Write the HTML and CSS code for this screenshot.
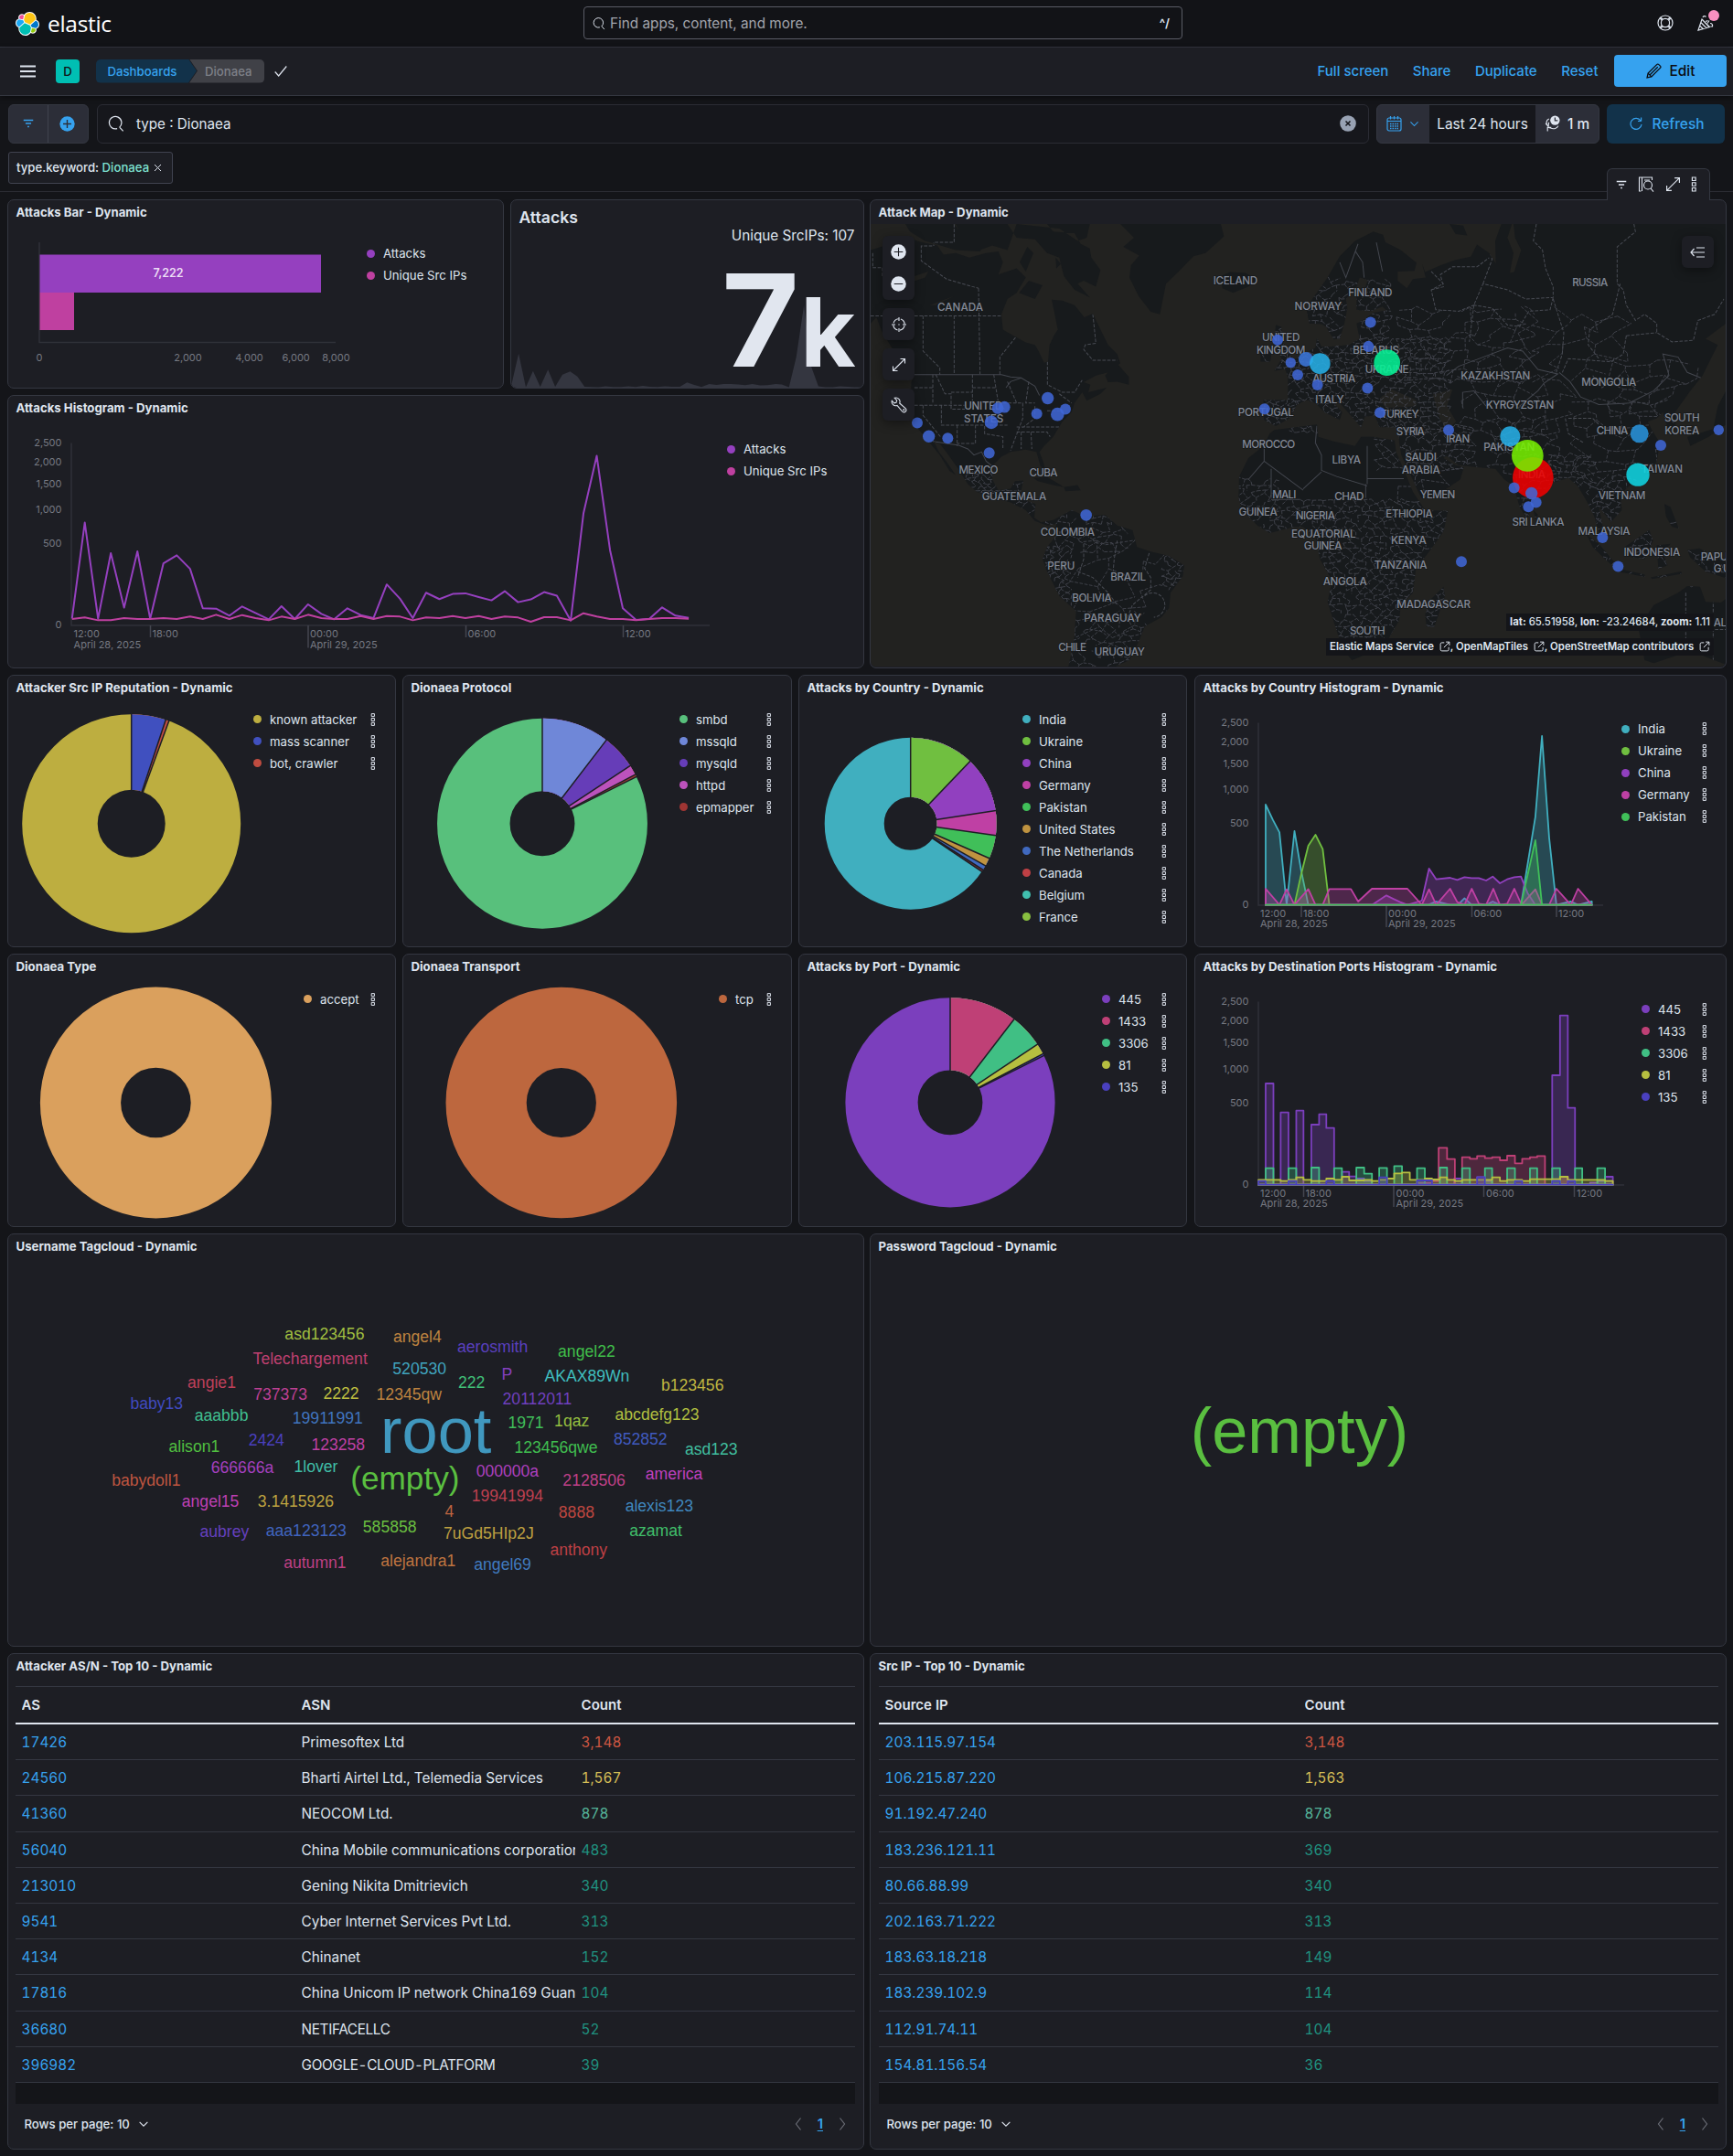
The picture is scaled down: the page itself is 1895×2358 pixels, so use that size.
FILE: index.html
```html
<!DOCTYPE html>
<html lang="en">
<head>
<meta charset="utf-8">
<title>Dionaea - Elastic</title>
<link rel="stylesheet" href="styles.css">
</head>
<body>
<svg class="defs" width="0" height="0">
  <symbol id="more" viewBox="0 0 6 14"><path d="M1.200.6h3.200v3H1.200zM1.200 5.500h3.200v3H1.200zM1.200 10.400h3.200v3H1.200z" fill="none" stroke="currentColor"/></symbol>
  <symbol id="search" viewBox="0 0 16 16"><path d="M11.300 11.700A6 6 0 1 0 9 13m2.300-1.300L14.800 15.500" fill="none" stroke="currentColor" stroke-width="1.100"/></symbol>
  <symbol id="down" viewBox="0 0 16 16"><path d="M3 5.500l5 5 5-5" fill="none" stroke="currentColor" stroke-width="1.300"/></symbol>
  <symbol id="filter" viewBox="0 0 16 16"><path d="M2 4h12M4.500 8h7M7 12h2" fill="none" stroke="currentColor" stroke-width="1.600"/></symbol>
  <symbol id="expand" viewBox="0 0 16 16"><path d="M9.500 1.500h5v5M14.500 1.500l-13 13M1.500 9.500v5h5" fill="none" stroke="currentColor" stroke-width="1.100"/></symbol>
  <symbol id="popout" viewBox="0 0 16 16"><path d="M7 2.500H3.500a2 2 0 0 0-2 2v8a2 2 0 0 0 2 2h8a2 2 0 0 0 2-2V9M9.500 1.500h5v5M14.500 1.500l-8 8" fill="none" stroke="currentColor" stroke-width="1.300"/></symbol>
  <symbol id="prev" viewBox="0 0 16 16"><path d="M10.500 1.500l-5 6.500 5 6.500" fill="none" stroke="currentColor" stroke-width="1.200"/></symbol>
  <symbol id="next" viewBox="0 0 16 16"><path d="M5.500 1.500l5 6.500-5 6.500" fill="none" stroke="currentColor" stroke-width="1.200"/></symbol>
</svg>

<header class="topbar">
  <div class="brand">
    <svg width="26" height="26" viewBox="0 0 32 32"><path fill="#fff" d="M32 16.770c0-2.680-1.660-5.030-4.170-5.940.11-.57.17-1.150.17-1.740C28 4.070 23.920 0 18.910 0c-2.930 0-5.650 1.400-7.360 3.770a4.800 4.800 0 0 0-2.960-1.010 4.830 4.830 0 0 0-4.530 6.530A6.370 6.370 0 0 0 0 15.200c0 2.700 1.670 5.060 4.200 5.960-.12.56-.17 1.150-.17 1.740A9.070 9.070 0 0 0 13.090 32c2.940 0 5.670-1.420 7.360-3.800.84.66 1.870 1.020 2.950 1.020a4.830 4.830 0 0 0 4.530-6.530A6.380 6.380 0 0 0 32 16.770"/><path fill="#fec514" d="M12.580 13.790l7 3.200 7.070-6.200c.1-.51.15-1.020.15-1.560 0-4.330-3.530-7.860-7.860-7.860-2.600 0-5.020 1.280-6.490 3.430l-1.170 6.100z"/><path fill="#00bfb3" d="M5.330 21.230c-.1.51-.15 1.040-.15 1.580a7.900 7.900 0 0 0 7.920 7.900c2.640 0 5.100-1.320 6.570-3.500l1.170-6.080-1.560-2.980-7.030-3.200z"/><path fill="#f04e98" d="M5.290 9.100l4.800 1.130 1.050-5.450A3.790 3.790 0 0 0 5.290 9.100"/><path fill="#1ba9f5" d="M4.870 10.240A5.260 5.260 0 0 0 1.300 15.200c0 2.240 1.380 4.230 3.470 5.030l6.740-6.100-1.240-2.640z"/><path fill="#93c90e" d="M20.870 27.210a3.790 3.790 0 0 0 5.840-4.300l-4.800-1.130z"/><path fill="#07c" d="M21.850 20.560l5.280 1.240a5.260 5.260 0 0 0 3.570-4.970 5.400 5.400 0 0 0-3.460-5.020l-6.900 6.050z"/></svg>
    <span>elastic</span>
  </div>
  <div class="find"><svg width="14" height="15"><use href="#search"/></svg><span>Find apps, content, and more.</span><kbd>^/</kbd></div>
  <div class="topicons">
    <svg width="18" height="18" viewBox="0 0 18 18" fill="none" stroke="currentColor" stroke-width="1.200"><circle cx="9" cy="9" r="8"/><circle cx="9" cy="9" r="4.600"/><path d="M3.500 3L6.500 5.200M3 3.700l2.200 2.800M14.500 3l-3 2.200M15 3.700l-2.200 2.800M3.500 15l3-2.200M3 14.300l2.200-2.800M14.500 15l-3-2.200M15 14.300l-2.200-2.800"/></svg>
    <span class="news"><svg width="18" height="18" viewBox="0 0 18 18" fill="none" stroke="currentColor" stroke-width="1.200"><path d="M1 17L5 5l8.500 8.500zM3.800 8.500l6 6M2.500 12l4 3.700M5 5l8 8.500M6 3c.5-1.500 2.500-2 3.500-.5M9 7.500l2.500-1M11 9.500l2-3M14 9.500c2 0 3 1.500 2.500 3.500h-2"/></svg><i></i></span>
  </div>
</header>

<nav class="navbar">
  <svg class="burger" width="17" height="14"><path d="M0 1.500h17M0 7h17M0 12.500h17" stroke="currentColor" stroke-width="2"/></svg>
  <b class="space">D</b>
  <div class="crumbs"><a class="first">Dashboards</a><span class="last">Dionaea</span></div>
  <svg class="check" width="14" height="14" viewBox="0 0 14 14"><path d="M.7 7.500l4 4.500L13.300 1.500" fill="none" stroke="currentColor" stroke-width="1.200"/></svg>
  <div class="links"><a>Full screen</a><a>Share</a><a>Duplicate</a><a>Reset</a></div>
  <button class="edit"><svg width="17" height="17" viewBox="0 0 16 16"><path d="M1 15l1-4.500L11.200 1.300a1.100 1.100 0 0 1 1.600 0l1.900 1.900a1.100 1.100 0 0 1 0 1.600L5.500 14zM2 10.500L5.500 14M4 12l8-8" fill="none" stroke="currentColor" stroke-width="1.200"/></svg>Edit</button>
</nav>

<section class="query">
  <div class="group filters">
    <span><svg width="14" height="14"><use href="#filter"/></svg></span>
    <span><svg width="17" height="17" viewBox="0 0 16 16"><circle cx="8" cy="8" r="7.700" fill="#36a2ef"/><path d="M8 3.800v8.400M3.800 8h8.400" stroke="#2c2e38" stroke-width="1.300"/></svg></span>
  </div>
  <div class="kql"><svg width="18" height="18"><use href="#search"/></svg><span>type : Dionaea</span>
    <svg width="18" height="18" viewBox="0 0 18 18"><circle cx="9" cy="9" r="8.800" fill="#98a2b3"/><path d="M6.500 6.500l5 5M11.500 6.500l-5 5" stroke="#16171c" stroke-width="1.600"/></svg></div>
  <div class="group date">
    <span class="cal"><svg width="17" height="17" viewBox="0 0 17 17" fill="none" stroke="currentColor" stroke-width="1.200"><rect x="1" y="2" width="15" height="14" rx="2"/><path d="M1 5.500h15M4.500 0v3.500M8.500 0v3.500M12.500 0v3.500"/><path d="M4 8.500h9M4 11h9M4 13.500h9" stroke-dasharray="1.500 1" stroke-width="1.400"/></svg><svg width="13" height="13"><use href="#down"/></svg></span>
    <span class="range">Last 24 hours</span>
    <span class="auto"><svg width="17" height="18" viewBox="0 0 16 17"><circle cx="10.700" cy="5.300" r="4.900" fill="currentColor"/><path d="M10.700 2.300v3.200h2.800" stroke="#2c2e38" fill="none" stroke-width="1.200"/><path d="M4.500 3.800C1.500 5 .8 9 3.800 11.500M1 8.500l2.800 3 .5-4M14 11c-1 2.500-4.500 3.800-8 2.200L3 12.500M3 16.500v-4h3.800" stroke="currentColor" fill="none" stroke-width="1.100"/></svg>1 m</span>
  </div>
  <button class="refresh"><svg width="14" height="14" viewBox="0 0 14 14" fill="none" stroke="currentColor" stroke-width="1.200"><path d="M12.600 4.500V.5M12.600 4.500H9M12 4A6 6 0 1 0 13 8"/></svg>Refresh</button>
</section>
<div class="pills"><span class="pill">type.keyword: <em>Dionaea</em><svg width="9" height="9"><path d="M1 1l7 7M8 1l-7 7" stroke="currentColor"/></svg></span></div>

<main class="board">
  <article class="panel p-bar">
    <h2>Attacks Bar - Dynamic</h2>
    <div class="body">
      <svg width="392" height="178" viewBox="9 245 392 178">
        <path class="axis" d="M43 265v109.500h324"/>
        <rect x="43.500" y="278.500" width="307.500" height="41.500" fill="#9540bf"/><rect x="43.500" y="320" width="37.500" height="41" fill="#bf40a0"/>
        <text class="val" x="184" y="303">7,222</text>
        <g class="tick mid"><text x="43" y="395">0</text><text x="205.500" y="395">2,000</text><text x="272.600" y="395">4,000</text><text x="323.700" y="395">6,000</text><text x="367.500" y="395">8,000</text></g>
      </svg>
      <ul class="legend low"><li><i style="background:#9540bf"></i>Attacks</li><li><i style="background:#bf40a0"></i>Unique Src IPs</li></ul>
    </div>
  </article>

  <article class="panel p-metric">
    <svg width="385" height="205" viewBox="559 219 385 205">
      <g transform="translate(0 210) scale(.60588 .33478)"><path fill="#343640" d="M923 645L923 630 936 528 949 638 962 585 975 636 989 580 1002 636 1015 597 1029 586 1042 603 1055 636 1080 638 1093 635 1107 637 1121 637 1134 635 1147 637 1160 633 1173 636 1187 637 1200 635 1213 636 1227 636 1240 622 1253 630 1266 637 1280 627 1293 630 1306 627 1319 627 1333 629 1345 631 1358 627 1372 632 1385 631 1400 627 1411 629 1424 638 1437 540 1451 370 1464 570 1477 635 1490 638 1503 638 1516 635 1543 638 1558 638V645z"/></g>
      <text class="m-title" x="567.500" y="243.500">Attacks</text>
      <text class="m-extra" x="934.500" y="263">Unique SrcIPs: 107</text>
      <text class="m-big" x="789" y="400.500" textLength="85" lengthAdjust="spacingAndGlyphs">7</text>
      <text class="m-big unit" x="935.500" y="400.500">k</text>
    </svg>
  </article>

  <article class="panel p-hist">
    <h2>Attacks Histogram - Dynamic</h2>
    <div class="body">
      <svg width="786" height="270" viewBox="9 459 786 270">
        <path class="axis" d="M78 484.500V684h698"/>
        <path class="tk" d="M164.500 684v13M509.500 684v13M681.500 684v13M337 684v24.500"/>
        <g class="tick end"><text x="67.500" y="488">2,500</text><text x="67.500" y="509.200">2,000</text><text x="67.500" y="533.300">1,500</text><text x="67.500" y="561.200">1,000</text><text x="67.500" y="598.200">500</text><text x="67.500" y="687">0</text></g>
        <g class="tick"><text x="80.600" y="697">12:00</text><text x="80.600" y="708.500">April 28, 2025</text><text x="166.500" y="697">18:00</text><text x="339" y="697">00:00</text><text x="339" y="708.500">April 29, 2025</text><text x="511.500" y="697">06:00</text><text x="683.500" y="697">12:00</text></g>
        <g class="lines" transform="translate(0 210) scale(.60588 .33478)">
          <polyline stroke="#9540bf" points="130,1393 153,1080 177,1394 200,1180 224,1358 248,1174 271,1394 295,1213 319,1187 343,1231 366,1360 390,1361 414,1384 437,1354 461,1375 485,1396 508,1353 532,1395 556,1347 580,1378 603,1396 627,1360 651,1382 674,1392 698,1282 722,1329 745,1392 769,1309 793,1330 817,1313 840,1311 864,1323 887,1334 911,1304 935,1340 958,1331 982,1307 1005,1319 1030,1400 1053,1050 1077,862 1101,1170 1124,1360 1148,1398 1172,1394 1195,1357 1219,1384 1243,1391"/>
          <polyline stroke="#bf40a0" points="130,1395 153,1390 177,1399 200,1399 224,1392 248,1395 271,1395 295,1392 319,1395 343,1387 366,1395 390,1381 414,1395 437,1382 461,1392 485,1399 508,1387 532,1395 556,1381 580,1392 603,1395 627,1395 651,1385 674,1395 698,1385 722,1387 745,1399 769,1390 793,1392 817,1385 840,1392 864,1385 887,1395 911,1387 935,1390 958,1404 982,1389 1005,1389 1030,1399 1053,1376 1077,1387 1101,1395 1124,1395 1148,1399 1172,1395 1195,1392 1219,1392 1243,1394"/>
        </g>
      </svg>
      <ul class="legend low"><li><i style="background:#9540bf"></i>Attacks</li><li><i style="background:#bf40a0"></i>Unique Src IPs</li></ul>
    </div>
  </article>

  <article class="panel p-map">
    <div class="hover"><svg width="14" height="14"><use href="#filter"/></svg><svg width="18" height="18" viewBox="0 0 18 18" fill="none" stroke="currentColor" stroke-width="1.100"><path d="M3.500 16H1.500V1h14v3M4.500 1v15M7 4h6"/><circle cx="11" cy="9.500" r="4.500"/><path d="M14 13l3 3.700"/></svg><svg width="17" height="17"><use href="#expand"/></svg><svg width="7" height="17"><use href="#more"/></svg></div>
    <h2>Attack Map - Dynamic</h2>
    <div class="map">
      <svg width="935" height="484" viewBox="21 105 2805 1446" preserveAspectRatio="none">
        <defs>
          <path id="west" d="M21 190L60 178 120 145 190 165 240 175 260 205 300 200 345 215 400 200 440 195 455 230 440 270 500 250 530 280 500 330 470 350 450 400 455 450 490 470 530 492 560 500 572 520 590 558 603 555 608 500 622 470 635 450 625 400 615 352 650 355 690 370 722 410 750 398 775 450 800 500 830 530 840 560 800 590 760 600 720 622 742 630 735 655 795 640 775 660 730 682 715 655 690 690 680 720 650 750 632 780 620 800 590 830 575 850 590 890 592 912 578 895 565 850 530 842 480 850 450 865 425 890 420 940 440 975 480 970 495 945 522 943 515 975 505 1000 540 1012 562 1020 558 1065 580 1080 620 1072 640 1062 680 1040 730 1060 790 1055 830 1090 880 1105 895 1160 940 1175 1000 1190 1050 1220 1045 1255 1005 1310 1000 1360 975 1390 920 1420 900 1470 870 1530 820 1553H670L690 1450 695 1370 640 1320 600 1240 585 1200 600 1160 625 1130 630 1085 600 1090 560 1075 530 1040 480 1015 430 1000 370 980 340 955 305 900 275 858 250 825 228 815 245 850 272 885 300 925 280 912 248 860 205 808 165 760 150 700 155 620 165 595 110 540 60 460 40 410 21 430zM135 105H295L330 150 392 170 380 195 300 190 200 160 150 130zM300 105H470L500 150 560 155 600 200 640 215 655 275 690 320 740 345 700 300 720 290 760 310 775 255 745 215 740 185 710 170 690 135 620 130 600 105 690 105 740 105 730 150 700 160 640 120 500 105 470 190 420 175 380 190 330 160zM540 290L585 305 560 350 508 330zM628 215L645 235 630 250zM535 180L555 200 530 260 510 230zM840 105H1170L1180 145 1120 200 1080 210 1030 262 990 300 970 400 940 392 900 340 870 280 875 240 902 208 850 180 885 150zM1170 275L1200 262 1250 265 1290 285 1260 310 1210 330 1175 315zM828 558L868 605 868 630 830 620 800 622 790 600zM555 935L600 932 640 955 655 965 620 958 570 945zM655 965L700 958 710 975 660 978zM1350 435L1368 440 1375 495 1410 550 1400 575 1345 585 1370 545 1345 500zM1300 520L1338 518 1332 555 1300 555z"/>
          <path id="east" transform="translate(1410)" d="M-100 690L-98 745-60 765-15 740 10 695 40 680 70 690 100 720 150 745 158 720 120 680 150 690 190 735 220 770 232 735 265 730 280 768 342 770 345 820 352 860 380 920 410 985 420 1002 500 970 545 940 557 900 530 893 490 870 500 862 540 893 600 900 660 905 690 940 720 960 740 1030 765 1070 790 1000 850 950 900 935 930 960 960 1010 985 1060 1005 1130 1012 1090 1000 1030 1040 1078 1075 1040 1070 990 1100 960 1150 930 1190 880 1200 820 1175 780 1160 750 1190 740 1210 720 1225 770 1252 770 1250 720 1300 650 1340 600 1390 500 1350 480 1417 430V105H720L725 150 745 190 722 262 708 265 720 200 700 150 715 105H680L660 160 662 235 640 200 600 172 580 212 530 222 480 240 430 262 420 235 432 280 390 285 370 315 340 290 340 260 395 258 402 232 350 190 300 165 292 140 260 130 200 160 150 210 110 280 60 350 42 390 50 430 90 432 105 440 130 482 150 480 165 430 175 380 170 350 205 310 215 280 242 288 235 310 205 340 205 385 250 390 290 375 303 387 260 395 225 420 205 430 215 480 180 500 120 505 90 505 75 478 70 510 30 530-20 560-32 572-20 605-20 680-100 680zM-65 778L75 760 80 800 130 815 200 830 220 800 260 800 330 812 335 850 365 920 390 980 430 1040 505 1042 490 1110 440 1180 400 1230 390 1310 350 1350 345 1400 310 1460 240 1510 190 1530 165 1500 145 1450 110 1340 125 1270 85 1200 70 1130 30 1095 0 1095-80 1115-120 1090-170 1040-182 1000-180 930-150 870-100 830-80 790zM490 1290L495 1320 460 1422 435 1420 430 1380 450 1330zM510 105L555 110 568 142 530 138zM1390 700L1417 650V760L1360 800 1300 830 1290 800 1375 775zM960 1120L1000 1150 1050 1210 1055 1230 1020 1200 980 1160zM1060 1230L1150 1250V1258L1060 1240zM1085 1160L1130 1130 1165 1105 1178 1140 1150 1200 1090 1190zM1190 1155L1235 1150 1210 1180 1225 1220 1195 1232zM1215 1020L1235 1030 1262 1100 1240 1095 1220 1060zM1290 1170L1330 1165 1417 1210V1262L1350 1240 1300 1195zM1170 1260L1270 1240 1272 1248 1175 1265zM1130 1425L1180 1350 1260 1310 1290 1288 1332 1290 1350 1340 1400 1342 1417 1330V1545L1300 1500 1180 1540 1150 1530zM785 1040L800 1055 792 1070z"/>
          <clipPath id="land"><use href="#west"/><use href="#east"/></clipPath>
        </defs>
        <rect x="21" y="105" width="2805" height="1446" fill="#222220"/>
        <g fill="#171a1c"><use href="#west"/><use href="#east"/></g>
        <g fill="#222220"><path d="M1690 675L1730 645 1765 660 1810 680 1812 700 1710 706zM1865 662L1930 645 1912 700 1942 750 1912 780 1888 740zM150 280l60-20-10 20-60 20zM215 370l80-30-60 30z"/></g>
        <g clip-path="url(#land)" class="borders">
          <path id="mesh"/>
          <path class="solid" d="M160 597H450L480 605 515 608 560 635 575 665M465 640L480 620 515 608M225 815L310 828 340 840 360 860 385 850 400 880 425 900M1485 765L1480 820 1500 860V910L1550 930 1650 960M1650 830V955M1650 937H1770M1645 955V1000M1500 915L1440 970M1312 880L1440 975M1335 905V1000M1335 1005H1430M1312 835V880L1260 940M2280 590L2315 620 2350 670 2410 695 2510 690 2590 650 2640 600 2620 530 2670 540 2700 590 2750 610M1910 600L1950 570 2030 540 2110 510 2160 520 2210 580 2275 595 2230 625 2210 650 2150 700M1963 705V655L2000 650 2040 700M1560 230L1580 280 1620 170M1640 280L1635 230 1612 195M1680 165L1700 260"/>
          <path d="M295 405V595M375 315L380 595M193 405V520L248 575V597M445 597V540L505 465M601 555V630L650 655H690L715 615M21 405H450M295 105V165H228V177H187V225L270 285 375 315M750 400L760 495 725 500 720 515 750 550H830M225 597V690M165 640H225M165 697H330M235 597L265 660H285V710H330M285 655H355M355 597V700M355 640H430M425 597L440 690 470 720M253 697V762H470M193 697V730L250 800M305 762V830M365 762V822H305M395 765V790L455 800V840M470 620L500 690H520V740L480 845M515 785V840M547 785L550 840M500 768H640M560 700V740L520 770M500 785H600L610 800M640 660L680 690M600 715H650M440 690H520M540 620L530 690H560M28 200V248H60V275M2205 105L2195 160 2225 190 2235 250 2260 310V345L2170 350 2110 320 2030 300 2000 370 1985 490M2030 300L2060 220 2050 190M1860 320L1900 310 1890 270 1930 245H2010L2050 215M2525 105L2530 130 2470 180V300L2490 320 2500 370 2530 420 2560 400 2600 430V460L2650 490 2720 485 2735 420 2790 400 2820 350M2480 300L2455 400 2380 450 2375 500 2410 545M2260 345L2250 385 2180 390 2150 440 2110 435 2060 380 2000 370M2260 350L2295 460 2290 530 2270 590M2500 470L2490 530 2450 555 2310 545 2290 590M2500 470L2600 460M2310 740H2390L2410 760M2300 740L2310 790 2360 820M2390 600L2420 640 2480 600 2530 640M2695 1310V1551M2785 1330V1551M2695 1430H2826M720 1150V1200L700 1260M815 1260L820 1200 830 1140M935 1180L920 1230 940 1260V1300L880 1350 860 1400M920 1320A40 40 0 1 1 950 1390M700 1240L750 1260 800 1310 830 1350M1860 260L1900 300 1860 320 1875 385 1950 390 2000 370"/>
        </g>
        <g class="places">
          <text x="315" y="388" textLength="150">CANADA</text><text x="391" y="711" textLength="126">UNITED</text><text x="392" y="753" textLength="130">STATES</text><text x="375" y="922" textLength="129">MEXICO</text><text x="588" y="929" textLength="93">CUBA</text><text x="492" y="1008" textLength="212">GUATEMALA</text><text x="667" y="1125" textLength="178">COLOMBIA</text><text x="646" y="1235" textLength="90">PERU</text><text x="866" y="1269" textLength="116">BRAZIL</text><text x="747" y="1340" textLength="130">BOLIVIA</text><text x="815" y="1406" textLength="188">PARAGUAY</text><text x="683" y="1501" textLength="93">CHILE</text><text x="838" y="1514" textLength="165">URUGUAY</text><text x="1218" y="302" textLength="145">ICELAND</text><text x="1367" y="488" textLength="124">UNITED</text><text x="1367" y="530" textLength="160">KINGDOM</text><text x="1318" y="732" textLength="183">PORTUGAL</text><text x="1327" y="837" textLength="174">MOROCCO</text><text x="1378" y="1000" textLength="78">MALI</text><text x="1292" y="1058" textLength="127">GUINEA</text>
          <text x="2381" y="309" textLength="117">RUSSIA</text><text x="1660" y="341" textLength="145">FINLAND</text><text x="1489" y="386" textLength="155">NORWAY</text><text x="1679" y="530" textLength="152">BELARUS</text><text x="1715" y="592" textLength="144">UKRAINE</text><text x="1541" y="621" textLength="141">AUSTRIA</text><text x="1527" y="692" textLength="94">ITALY</text><text x="1757" y="737" textLength="126">TURKEY</text><text x="1792" y="795" textLength="93">SYRIA</text><text x="1948" y="818" textLength="78">IRAN</text><text x="2071" y="614" textLength="228">KAZAKHSTAN</text><text x="2443" y="633" textLength="180">MONGOLIA</text><text x="2151" y="708" textLength="224">KYRGYZSTAN</text><text x="2454" y="791" textLength="104">CHINA</text><text x="2683" y="751" textLength="116">SOUTH</text><text x="2683" y="792" textLength="114">KOREA</text><text x="2116" y="846" textLength="168">PAKISTAN</text><text x="1582" y="887" textLength="95">LIBYA</text><text x="1826" y="879" textLength="103">SAUDI</text><text x="1826" y="920" textLength="126">ARABIA</text><text x="2190" y="936" textLength="90">INDIA</text><text x="2617" y="919" textLength="136">TAIWAN</text><text x="1591" y="1008" textLength="96">CHAD</text><text x="1881" y="1000" textLength="116">YEMEN</text><text x="2486" y="1004" textLength="155">VIETNAM</text><text x="1480" y="1069" textLength="130">NIGERIA</text><text x="1788" y="1063" textLength="154">ETHIOPIA</text><text x="2211" y="1090" textLength="171">SRI LANKA</text><text x="1507" y="1129" textLength="212">EQUATORIAL</text><text x="1505" y="1170" textLength="125">GUINEA</text><text x="1786" y="1152" textLength="116">KENYA</text><text x="2427" y="1120" textLength="171">MALAYSIA</text><text x="2584" y="1191" textLength="185">INDONESIA</text><text x="2800" y="1203" textLength="112">PAPUA</text><text x="2822" y="1243" textLength="72">GUI</text><text x="1760" y="1232" textLength="173">TANZANIA</text><text x="1577" y="1286" textLength="144">ANGOLA</text><text x="1868" y="1359" textLength="242">MADAGASCAR</text><text x="1651" y="1447" textLength="116">SOUTH</text><text x="2768" y="1421" textLength="185">AUSTRALIA</text>
        </g>
        <g class="hits"><circle cx="174" cy="755" r="18"/><circle cx="212" cy="799" r="20"/><circle cx="274" cy="805" r="18"/><circle cx="410" cy="853" r="18"/><circle cx="417" cy="753" r="22"/><circle cx="438" cy="707" r="19"/><circle cx="460" cy="703" r="19"/><circle cx="566" cy="725" r="18"/><circle cx="602" cy="674" r="20"/><circle cx="634" cy="727" r="22"/><circle cx="660" cy="710" r="18"/><circle cx="728" cy="1056" r="19"/><circle cx="1313" cy="709" r="18"/><circle cx="1356" cy="484" r="18"/><circle cx="1399" cy="558" r="17"/><circle cx="1422" cy="598" r="18"/><circle cx="1449" cy="547" r="24" fill="#3c78dc"/><circle cx="1495" cy="561" r="34" fill="#26b0e8"/><circle cx="1487" cy="631" r="18"/><circle cx="1661" cy="426" r="18"/><circle cx="1654" cy="505" r="18"/><circle cx="1715" cy="558" r="43" fill="#04f295"/><circle cx="1651" cy="641" r="18"/><circle cx="1692" cy="721" r="18"/><circle cx="1917" cy="778" r="18"/><circle cx="2119" cy="799" r="33" fill="#26b0e8"/><circle cx="2194" cy="934" r="67" fill="#f00000"/><circle cx="2176" cy="862" r="52" fill="#76f000"/><circle cx="2132" cy="967" r="18"/><circle cx="2189" cy="985" r="20"/><circle cx="2204" cy="1015" r="18"/><circle cx="2179" cy="1029" r="18"/><circle cx="1959" cy="1208" r="18"/><circle cx="2422" cy="1130" r="18"/><circle cx="2473" cy="1224" r="18"/><circle cx="2543" cy="790" r="30" fill="#2893dd"/><circle cx="2538" cy="924" r="38" fill="#10d6e4"/><circle cx="2613" cy="828" r="18"/><circle cx="2803" cy="778" r="17"/></g>
      </svg>
      <div class="tools">
        <div class="tool tall"><svg width="17" height="17" viewBox="0 0 16 16"><circle cx="8" cy="8" r="7.800" fill="#dfe5ef"/><path d="M8 3.500v9M3.500 8h9" stroke="#1d1e24"/></svg><svg width="17" height="17" viewBox="0 0 16 16"><circle cx="8" cy="8" r="7.800" fill="#dfe5ef"/><path d="M3.500 8h9" stroke="#1d1e24"/></svg></div>
        <div class="tool"><svg width="16" height="16" viewBox="0 0 16 16" fill="none" stroke="currentColor" stroke-width="1.100"><circle cx="8" cy="8" r="6.200" stroke-dasharray="7.300 2.440" stroke-dashoffset="8.500"/><path d="M8 0v4M8 12v4M0 8h4M12 8h4M7.300 8h1.400"/></svg></div>
        <div class="tool"><svg width="16" height="16"><use href="#expand"/></svg></div>
        <div class="tool"><svg width="18" height="18" viewBox="0 0 18 18" fill="none" stroke="currentColor" stroke-width="1.100"><path d="M1.300 4.200a4.300 4.300 0 0 0 5.700 5.200l5.600 6.600a2.450 2.450 0 1 0 3.500-3.400L9.700 7A4.300 4.300 0 0 0 4.200 1.300L6.700 3.900 6 6.200l-2.200.6z"/><circle cx="14.300" cy="14.300" r=".5"/></svg></div>
      </div>
      <div class="tool toc"><svg width="17" height="12" viewBox="0 0 17 12" fill="none" stroke="currentColor" stroke-width="1.200"><path d="M7 1h9M1 6h15M7 11h9M4.500 2L1 6l3.500 4"/></svg></div>
      <p class="coords"><b>lat:</b> 65.51958, <b>lon:</b> -23.24684, <b>zoom:</b> 1.11</p>
      <p class="attrib">Elastic Maps Service <svg width="12" height="12"><use href="#popout"/></svg>, OpenMapTiles <svg width="12" height="12"><use href="#popout"/></svg>, OpenStreetMap contributors <svg width="12" height="12"><use href="#popout"/></svg></p>
    </div>
  </article>

  <article class="panel p-rep">
    <h2>Attacker Src IP Reputation - Dynamic</h2>
    <div class="body">
      <svg width="268" height="270" viewBox="9 765 268 270"><g class="donut" transform="translate(143.700 900.700) rotate(-90)" stroke-width="82.500">
        <circle r="78.250" stroke="#bdae40"/><circle r="78.250" pathLength="360" stroke="#bf4c40" stroke-dasharray="20 400"/><circle r="78.250" pathLength="360" stroke="#4050bf" stroke-dasharray="18.300 400"/>
        <path d="M36 0H121"/><path d="M36 0H121" transform="rotate(18.300)"/><path d="M36 0H121" transform="rotate(20.100)"/></g></svg>
      <ul class="legend"><li><i style="background:#bdae40"></i>known attacker<svg><use href="#more"/></svg></li><li><i style="background:#4050bf"></i>mass scanner<svg><use href="#more"/></svg></li><li><i style="background:#bf4c40"></i>bot, crawler<svg><use href="#more"/></svg></li></ul>
    </div>
  </article>

  <article class="panel p-proto">
    <h2>Dionaea Protocol</h2>
    <div class="body">
      <svg width="302" height="270" viewBox="441 765 302 270"><g class="donut" transform="translate(593 900.700) rotate(-90)" stroke-width="79.500">
        <circle r="75.200" stroke="#58c07c"/><circle r="75.200" pathLength="360" stroke="#9e3533" stroke-dasharray="63.400 400"/><circle r="75.200" pathLength="360" stroke="#bc52bc" stroke-dasharray="62.200 400"/><circle r="75.200" pathLength="360" stroke="#663db8" stroke-dasharray="56.700 400"/><circle r="75.200" pathLength="360" stroke="#6f87d8" stroke-dasharray="37.500 400"/>
        <path d="M34 0H117"/><path d="M34 0H117" transform="rotate(37.500)"/><path d="M34 0H117" transform="rotate(56.700)"/><path d="M34 0H117" transform="rotate(62.200)"/><path d="M34 0H117" transform="rotate(63.600)"/></g></svg>
      <ul class="legend"><li><i style="background:#58c07c"></i>smbd<svg><use href="#more"/></svg></li><li><i style="background:#6f87d8"></i>mssqld<svg><use href="#more"/></svg></li><li><i style="background:#663db8"></i>mysqld<svg><use href="#more"/></svg></li><li><i style="background:#bc52bc"></i>httpd<svg><use href="#more"/></svg></li><li><i style="background:#9e3533"></i>epmapper<svg><use href="#more"/></svg></li></ul>
    </div>
  </article>

  <article class="panel p-country">
    <h2>Attacks by Country - Dynamic</h2>
    <div class="body">
      <svg width="244" height="270" viewBox="874 765 244 270"><g class="donut" transform="translate(995.700 900.700) rotate(-90)" stroke-width="65">
        <circle r="61.500" stroke="#40afbf"/><circle r="61.500" pathLength="360" stroke="#7a3038" stroke-dasharray="124 400"/><circle r="61.500" pathLength="360" stroke="#4069bf" stroke-dasharray="122.500 400"/><circle r="61.500" pathLength="360" stroke="#bf9340" stroke-dasharray="119.400 400"/><circle r="61.500" pathLength="360" stroke="#40bf59" stroke-dasharray="113.800 400"/><circle r="61.500" pathLength="360" stroke="#bf40a4" stroke-dasharray="98 400"/><circle r="61.500" pathLength="360" stroke="#9140bf" stroke-dasharray="81.400 400"/><circle r="61.500" pathLength="360" stroke="#70bf40" stroke-dasharray="43.700 400"/>
        <path d="M28 0H96"/><path d="M28 0H96" transform="rotate(43.700)"/><path d="M28 0H96" transform="rotate(81.400)"/><path d="M28 0H96" transform="rotate(98)"/><path d="M28 0H96" transform="rotate(113.800)"/><path d="M28 0H96" transform="rotate(119.400)"/><path d="M28 0H96" transform="rotate(122.500)"/><path d="M28 0H96" transform="rotate(124)"/></g></svg>
      <ul class="legend"><li><i style="background:#40afbf"></i>India<svg><use href="#more"/></svg></li><li><i style="background:#70bf40"></i>Ukraine<svg><use href="#more"/></svg></li><li><i style="background:#9140bf"></i>China<svg><use href="#more"/></svg></li><li><i style="background:#bf40a4"></i>Germany<svg><use href="#more"/></svg></li><li><i style="background:#40bf59"></i>Pakistan<svg><use href="#more"/></svg></li><li><i style="background:#bf9340"></i>United States<svg><use href="#more"/></svg></li><li><i style="background:#4069bf"></i>The Netherlands<svg><use href="#more"/></svg></li><li><i style="background:#bf4045"></i>Canada<svg><use href="#more"/></svg></li><li><i style="background:#40bfae"></i>Belgium<svg><use href="#more"/></svg></li><li><i style="background:#88bf40"></i>France<svg><use href="#more"/></svg></li></ul>
    </div>
  </article>

  <article class="panel p-chist">
    <h2>Attacks by Country Histogram - Dynamic</h2>
    <div class="body">
      <svg width="466" height="270" viewBox="1307 765 466 270">
        <path class="axis" d="M1376 790.500V990h377"/><path class="tk" d="M1423 990v13M1609.500 990v13M1702 990v13M1516 990v24"/>
        <g class="tick end"><text x="1365.500" y="794.300">2,500</text><text x="1365.500" y="815.300">2,000</text><text x="1365.500" y="839.300">1,500</text><text x="1365.500" y="867.300">1,000</text><text x="1365.500" y="904.300">500</text><text x="1365.500" y="993.300">0</text></g>
        <g class="tick"><text x="1378" y="1003">12:00</text><text x="1378" y="1014.300">April 28, 2025</text><text x="1425" y="1003">18:00</text><text x="1518" y="1003">00:00</text><text x="1518" y="1014.300">April 29, 2025</text><text x="1611.500" y="1003">06:00</text><text x="1704" y="1003">12:00</text></g>
        <g class="areas" transform="translate(865 730) scale(.6569 .33333)">
          <path stroke="#40afbf" fill="#40afbf" d="M790 779V450L802 500 813 541 825 779 838 537 849 665 861 779H1061L1073 768 1085 773 1097 779H1110L1121 757 1133 779H1157L1168 768 1180 779H1215L1239 490 1250 225 1262 560 1274 779 1298 768 1310 779 1333 768V779z"/>
          <path stroke="#70bf40" fill="#70bf40" d="M790 779H838L849 680 861 585 873 549 885 596 896 779H1333z"/>
          <path stroke="#9140bf" fill="#9140bf" d="M790 779H967L991 748 1014 770 1026 779 1050 765 1062 660 1074 695 1097 690 1109 697 1121 688 1133 691 1145 691 1157 699 1168 686 1180 708 1192 695 1204 688 1215 686 1226 740 1239 779H1333z"/>
          <path stroke="#bf40a4" fill="#bf40a4" d="M790 779V726L813 779 825 728 838 779 861 727 873 779H885L896 727H932L944 768 967 726H1026L1050 779 1062 728 1074 779 1097 726 1109 770 1121 779 1133 726 1145 775 1157 779 1169 726 1180 779 1192 775 1204 726 1216 779 1239 728 1250 779H1262L1274 726 1298 779 1310 726 1333 779z"/>
          <path stroke="#40bf59" fill="#40bf59" d="M790 779H1215L1239 567 1250 779H1333z"/>
        </g>
      </svg>
      <ul class="legend low"><li><i style="background:#40afbf"></i>India<svg><use href="#more"/></svg></li><li><i style="background:#70bf40"></i>Ukraine<svg><use href="#more"/></svg></li><li><i style="background:#9140bf"></i>China<svg><use href="#more"/></svg></li><li><i style="background:#bf40a4"></i>Germany<svg><use href="#more"/></svg></li><li><i style="background:#40bf59"></i>Pakistan<svg><use href="#more"/></svg></li></ul>
    </div>
  </article>

  <article class="panel p-type">
    <h2>Dionaea Type</h2>
    <div class="body">
      <svg width="323" height="270" viewBox="9 1070 323 270"><g class="donut" transform="translate(170.400 1206)" stroke-width="88.200"><circle r="82.400" stroke="#daa05d"/></g></svg>
      <ul class="legend"><li><i style="background:#daa05d"></i>accept<svg><use href="#more"/></svg></li></ul>
    </div>
  </article>

  <article class="panel p-trans">
    <h2>Dionaea Transport</h2>
    <div class="body">
      <svg width="345" height="270" viewBox="441 1070 345 270"><g class="donut" transform="translate(613.800 1206)" stroke-width="88.200"><circle r="82.200" stroke="#bd673e"/></g></svg>
      <ul class="legend"><li><i style="background:#bd673e"></i>tcp<svg><use href="#more"/></svg></li></ul>
    </div>
  </article>

  <article class="panel p-port">
    <h2>Attacks by Port - Dynamic</h2>
    <div class="body">
      <svg width="331" height="270" viewBox="874 1070 331 270"><g class="donut" transform="translate(1039 1205.800) rotate(-90)" stroke-width="79.200">
        <circle r="75" stroke="#7b3fbd"/><circle r="75" pathLength="360" stroke="#4a40bf" stroke-dasharray="63.200 400"/><circle r="75" pathLength="360" stroke="#b6bf40" stroke-dasharray="62.300 400"/><circle r="75" pathLength="360" stroke="#40bf84" stroke-dasharray="56.300 400"/><circle r="75" pathLength="360" stroke="#bf4076" stroke-dasharray="37.500 400"/>
        <path d="M34 0H117"/><path d="M34 0H117" transform="rotate(37.500)"/><path d="M34 0H117" transform="rotate(56.300)"/><path d="M34 0H117" transform="rotate(62.300)"/><path d="M34 0H117" transform="rotate(63.400)"/></g></svg>
      <ul class="legend"><li><i style="background:#7b3fbd"></i>445<svg><use href="#more"/></svg></li><li><i style="background:#bf4076"></i>1433<svg><use href="#more"/></svg></li><li><i style="background:#40bf84"></i>3306<svg><use href="#more"/></svg></li><li><i style="background:#b6bf40"></i>81<svg><use href="#more"/></svg></li><li><i style="background:#4a40bf"></i>135<svg><use href="#more"/></svg></li></ul>
    </div>
  </article>

  <article class="panel p-phist">
    <h2>Attacks by Destination Ports Histogram - Dynamic</h2>
    <div class="body">
      <svg width="488" height="270" viewBox="1307 1070 488 270">
        <path class="axis" d="M1376 1095.500V1296h400"/><path class="tk" d="M1425.500 1296v13M1622.500 1296v13M1721.500 1296v13M1524 1296v24"/>
        <g class="tick end"><text x="1365.500" y="1099.300">2,500</text><text x="1365.500" y="1120.300">2,000</text><text x="1365.500" y="1144.300">1,500</text><text x="1365.500" y="1172.700">1,000</text><text x="1365.500" y="1209.700">500</text><text x="1365.500" y="1299">0</text></g>
        <g class="tick"><text x="1378" y="1309">12:00</text><text x="1378" y="1320.300">April 28, 2025</text><text x="1427.500" y="1309">18:00</text><text x="1526.500" y="1309">00:00</text><text x="1526.500" y="1320.300">April 29, 2025</text><text x="1625" y="1309">06:00</text><text x="1724" y="1309">12:00</text></g>
        <g class="areas" transform="translate(865 1035) scale(.6569 .33333)">
          <path stroke="#7b3fbd" fill="#7b3fbd" d="M778 782H790V450H803V782H815V545H828V782H841V539H853V782H866V585H879V551H891V596H904V782H917V740H929V755H941V762H954V770H967V782H1104V762H1117V782H1142V757H1155V770H1167V782H1267V423H1280V227H1293V530H1305V782H1330V775H1343V770H1355V756H1368V782z"/>
          <path stroke="#bf4076" fill="#bf4076" d="M778 782H1042V776H1067V770H1078V661H1092V698H1105V782H1117V692H1130V697H1142V688H1155V695H1167V692H1180V702H1192V687H1205V712H1217V697H1230V692H1242V688H1255V782H1280V756H1293V782H1368z"/>
          <path stroke="#40bf84" fill="#40bf84" d="M778 782H790V728H803V782H828V728H841V782H866V726H879V782H904V728H917V782H941V726H954V746H967V782H979V727H992V782H1004V721H1017V782H1042V728H1055V782H1080V726H1092V782H1117V728H1130V782H1155V728H1167V782H1192V728H1205V782H1230V728H1242V782H1267V728H1280V782H1305V728H1317V782H1342V728H1355V782H1368z"/>
          <path stroke="#b6bf40" fill="#b6bf40" d="M778 782V766H815V770H828V766H841V758H853V766H866V770H891V762H904V766H917V756H929V768H954V766H967V770H979V766H992V762H1004V745H1017V742H1030V766H1055V762H1067V765H1080V758H1092V766H1105V770H1117V766H1167V758H1180V770H1192V766H1217V770H1230V764H1280V756H1293V766H1355V770H1368V782z"/>
          <path stroke="#4a40bf" fill="#4a40bf" d="M778 782V770H790V782H828V770H841V782H891V770H904V782H979V758H992V782H1042V768H1067V782H1142V757H1155V782H1205V770H1217V782H1267V770H1280V782H1293V770H1305V782H1368z"/>
        </g>
      </svg>
      <ul class="legend low"><li><i style="background:#7b3fbd"></i>445<svg><use href="#more"/></svg></li><li><i style="background:#bf4076"></i>1433<svg><use href="#more"/></svg></li><li><i style="background:#40bf84"></i>3306<svg><use href="#more"/></svg></li><li><i style="background:#b6bf40"></i>81<svg><use href="#more"/></svg></li><li><i style="background:#4a40bf"></i>135<svg><use href="#more"/></svg></li></ul>
    </div>
  </article>

  <article class="panel p-user">
    <h2>Username Tagcloud - Dynamic</h2>
    <svg class="cloud" width="935" height="423" viewBox="9 1375.500 935 423">
      <text x="354.900" y="1464" fill="#a0bf40">asd123456</text><text x="456.300" y="1467.300" fill="#bf8440">angel4</text><text x="538.600" y="1478.300" fill="#5a40bf">aerosmith</text><text x="641.400" y="1483" fill="#40bf4a">angel22</text><text x="339.200" y="1491" fill="#bf4070">Telechargement</text><text x="458.700" y="1502" fill="#40a4bf">520530</text><text x="554.400" y="1508" fill="#8440bf">P</text><text x="641.900" y="1510.700" fill="#40bfbf">AKAX89Wn</text><text x="515.600" y="1517" fill="#40bf78">222</text><text x="757.200" y="1520.700" fill="#bfb540">b123456</text><text x="231.500" y="1517" fill="#bf405a">angie1</text><text x="306.600" y="1530" fill="#bf4095">737373</text><text x="373.100" y="1529" fill="#bfbf40">2222</text><text x="447.300" y="1530" fill="#bf8440">12345qw</text><text x="587.400" y="1535.300" fill="#7040bf">20112011</text><text x="171.300" y="1540" fill="#404abf">baby13</text><text x="242.100" y="1553" fill="#40bf90">aaabbb</text><text x="358.300" y="1556" fill="#4074bf">19911991</text><text x="575" y="1561" fill="#40bf5a">1971</text><text x="625.200" y="1559" fill="#95bf40">1qaz</text><text x="718.500" y="1552" fill="#b0bf40">abcdefg123</text><text class="xl" x="476.700" y="1588.700" fill="#4098bf">root</text><text x="291.300" y="1580" fill="#4a40bf">2424</text><text x="369.800" y="1585" fill="#bf40a4">123258</text><text x="608" y="1588" fill="#40bf50">123456qwe</text><text x="700.300" y="1579.300" fill="#405abf">852852</text><text x="777.800" y="1590" fill="#40bf9f">asd123</text><text x="212.400" y="1587" fill="#50bf40">alison1</text><text x="265" y="1610" fill="#a440bf">666666a</text><text x="345.400" y="1609" fill="#40bfa8">1lover</text><text x="554.900" y="1614" fill="#ae40bf">000000a</text><text x="649.600" y="1624" fill="#bf4088">2128506</text><text x="737.100" y="1617" fill="#bf40bf">america</text><text x="159.800" y="1624" fill="#bf5540">babydoll1</text><text class="lg" x="442.900" y="1628" fill="#5abf40">(empty)</text><text x="230.100" y="1647" fill="#bf40b5">angel15</text><text x="323.400" y="1647" fill="#bfa440">3.1415926</text><text x="554.900" y="1641" fill="#bf4050">19941994</text><text x="720.800" y="1652" fill="#4088bf">alexis123</text><text x="491.300" y="1658" fill="#bf6440">4</text><text x="630.400" y="1659" fill="#bf4740">8888</text><text x="245.400" y="1680" fill="#6540bf">aubrey</text><text x="334.800" y="1679" fill="#4064bf">aaa123123</text><text x="426.200" y="1675" fill="#6abf40">585858</text><text x="534.300" y="1682" fill="#bfa040">7uGd5HIp2J</text><text x="717" y="1679" fill="#40bf6a">azamat</text><text x="632.800" y="1700" fill="#bf4044">anthony</text><text x="344.400" y="1714" fill="#bf4084">autumn1</text><text x="457.300" y="1712" fill="#bf7440">alejandra1</text><text x="549.600" y="1716" fill="#407abf">angel69</text>
    </svg>
  </article>

  <article class="panel p-pass">
    <h2>Password Tagcloud - Dynamic</h2>
    <svg class="cloud" width="935" height="423" viewBox="952 1376 935 423"><text class="xl" x="1421" y="1589" fill="#5abf40">(empty)</text></svg>
  </article>

  <article class="panel p-asn">
    <h2>Attacker AS/N - Top 10 - Dynamic</h2>
    <div class="grid three">
      <div class="tr th"><span>AS</span><span>ASN</span><span>Count</span></div>
      <div class="tr"><a>17426</a><span>Primesoftex Ltd</span><span class="c1">3,148</span></div>
      <div class="tr"><a>24560</a><span>Bharti Airtel Ltd., Telemedia Services</span><span class="c2">1,567</span></div>
      <div class="tr"><a>41360</a><span>NEOCOM Ltd.</span><span class="c3">878</span></div>
      <div class="tr"><a>56040</a><span>China Mobile communications corporation</span><span class="c4">483</span></div>
      <div class="tr"><a>213010</a><span>Gening Nikita Dmitrievich</span><span class="c4">340</span></div>
      <div class="tr"><a>9541</a><span>Cyber Internet Services Pvt Ltd.</span><span class="c4">313</span></div>
      <div class="tr"><a>4134</a><span>Chinanet</span><span class="c4">152</span></div>
      <div class="tr"><a>17816</a><span>China Unicom IP network China169 Guangdong</span><span class="c4">104</span></div>
      <div class="tr"><a>36680</a><span class="caps">NETIFACELLC</span><span class="c4">52</span></div>
      <div class="tr"><a>396982</a><span class="caps">GOOGLE-CLOUD-PLATFORM</span><span class="c4">39</span></div>
      <div class="pad"></div>
    </div>
    <footer><span>Rows per page: 10</span><svg width="14" height="14"><use href="#down"/></svg><svg class="pg back" width="16" height="16"><use href="#prev"/></svg><u>1</u><svg class="pg" width="16" height="16"><use href="#next"/></svg></footer>
  </article>

  <article class="panel p-ip">
    <h2>Src IP - Top 10 - Dynamic</h2>
    <div class="grid two">
      <div class="tr th"><span>Source IP</span><span>Count</span></div>
      <div class="tr"><a>203.115.97.154</a><span class="c1">3,148</span></div>
      <div class="tr"><a>106.215.87.220</a><span class="c2">1,563</span></div>
      <div class="tr"><a>91.192.47.240</a><span class="c3">878</span></div>
      <div class="tr"><a>183.236.121.11</a><span class="c4">369</span></div>
      <div class="tr"><a>80.66.88.99</a><span class="c4">340</span></div>
      <div class="tr"><a>202.163.71.222</a><span class="c4">313</span></div>
      <div class="tr"><a>183.63.18.218</a><span class="c4">149</span></div>
      <div class="tr"><a>183.239.102.9</a><span class="c4">114</span></div>
      <div class="tr"><a>112.91.74.11</a><span class="c4">104</span></div>
      <div class="tr"><a>154.81.156.54</a><span class="c4">36</span></div>
      <div class="pad"></div>
    </div>
    <footer><span>Rows per page: 10</span><svg width="14" height="14"><use href="#down"/></svg><svg class="pg back" width="16" height="16"><use href="#prev"/></svg><u>1</u><svg class="pg" width="16" height="16"><use href="#next"/></svg></footer>
  </article>
</main>
<script src="map.js"></script>
</body>
</html>
```
FILE: map.js
```js
// Province borders: a jittered honeycomb per region, clipped to the land shapes.
// Each region is [x, y, width, height, cell].
const regions = [
  [1390, 480, 520, 290, 16], [1440, 290, 270, 190, 19], [1760, 385, 400, 225, 33],
  [1960, 620, 340, 130, 40], [1680, 770, 320, 120, 19], [1225, 940, 130, 180, 17],
  [1355, 1010, 560, 450, 17], [1740, 900, 200, 90, 50], [2050, 750, 200, 320, 28],
  [2250, 860, 130, 90, 18], [2330, 690, 290, 250, 38], [2370, 930, 130, 150, 17],
  [2440, 560, 330, 130, 42], [2160, 400, 320, 190, 50], [600, 1040, 260, 120, 22],
  [585, 1160, 90, 190, 13], [700, 1150, 280, 240, 56], [980, 1180, 80, 100, 14],
  [660, 1380, 260, 175, 22], [330, 910, 110, 90, 11], [440, 960, 120, 70, 20],
  [2370, 1080, 450, 190, 20], [1310, 680, 100, 90, 15], [1310, 440, 110, 140, 19]
];
let seed = 11;
const rnd = () => (seed = (seed * 16807) % 2147483647) / 2147483647 - 0.5;
let d = '';
for (const [x0, y0, w, h, c] of regions) {
  const rows = Math.ceil(h / c), cols = Math.ceil(w / c);
  const pt = [];
  for (let r = 0; r <= rows; r++) {
    pt.push([]);
    for (let k = 0; k <= cols; k++) {
      const zig = (r + k) % 2 ? c * 0.18 : -c * 0.18;
      pt[r].push([Math.round(x0 + k * c + rnd() * c * 0.9), Math.round(y0 + r * c + zig + rnd() * c * 0.9)]);
    }
  }
  for (let r = 0; r <= rows; r++) for (let k = 0; k <= cols; k++) {
    if (k < cols && rnd() < 0.3) d += `M${pt[r][k]}L${pt[r][k + 1]}`;
    if (r < rows && (r + k) % 2) d += `M${pt[r][k]}L${pt[r + 1][k]}`;
  }
}
document.getElementById('mesh').setAttribute('d', d);
```
FILE: styles.css
```css
* { box-sizing: border-box; }
body { margin: 0; width: 1895px; background: #141519; color: #dfe5ef; font: 15.4px Inter, sans-serif; }
svg { display: block; flex: none; }
.defs { position: absolute; }
a { color: #36a2ef; }
button { font: inherit; border: 0; display: flex; align-items: center; justify-content: center; }

.topbar { height: 52px; background: #121317; border-bottom: 1px solid #343741; display: grid; grid-template-columns: 638px 655px 1fr; align-items: center; }
.brand { display: flex; align-items: center; gap: 9px; padding-left: 17px; }
.brand span { font: 24.500px "Open Sans", sans-serif; color: #fff; letter-spacing: -.3px; line-height: 24px; }
.find { height: 36px; margin-bottom: 1px; border: 1px solid #5a5c66; border-radius: 4px; display: flex; align-items: center; padding: 0 13px 0 9px; color: #a2a5ad; font-size: 15.300px; }
.find svg { color: #dfe5ef; margin-right: 5px; }
.find kbd { margin-left: auto; font: 600 13.200px Inter, sans-serif; color: #dfe5ef; }
.topicons { display: flex; justify-content: flex-end; gap: 26px; padding: 0 21px 2px 0; }
.news { position: relative; }
.news i { position: absolute; left: 12px; top: -5px; width: 12px; height: 12px; border-radius: 50%; background: #f990c0; }

.navbar { height: 53px; background: #1d1e24; border-bottom: 1px solid #343741; box-shadow: 0 2px 6px rgba(0,0,0,.45); display: flex; align-items: center; padding: 0 7px 1px 22px; position: relative; }
.space { width: 26px; height: 26px; margin-left: 22px; border-radius: 4px; background: #00bfb3; color: #101115; font: 500 13.200px/27px Inter, sans-serif; text-align: center; }
.crumbs { display: flex; margin-left: 18px; font: 500 13.200px/26px Inter, sans-serif; }
.first { width: 110px; padding-left: 12.500px; background: #12324a; border-radius: 5px 0 0 5px; clip-path: polygon(0 0, 101px 0, 110px 50%, 101px 100%, 0 100%); }
.last { width: 82px; margin-left: -8px; padding-left: 17px; background: #404147; color: #7e8087; border-radius: 0 5px 5px 0; clip-path: polygon(0 0, 100% 0, 100% 100%, 0 100%, 9px 50%); }
.check { margin-left: 11px; }
.links { margin-left: auto; display: flex; gap: 26.500px; font-weight: 500; font-size: 15px; }
.edit { width: 123px; height: 35px; margin-left: 17.500px; border-radius: 4px; background: #36a2ef; color: #0b0c10; gap: 9px; font-weight: 500; }

.query { display: flex; padding: 9px 8px 0 9px; height: 52px; }
.group { display: flex; height: 43px; border: 1px solid #343741; border-radius: 6px; background: #2c2e38; overflow: hidden; }
.group span { display: flex; align-items: center; justify-content: center; padding-bottom: 1px; }
.filters { width: 88px; color: #36a2ef; }
.filters span { width: 42px; }
.filters span + span { border-left: 1px solid #40434e; }
.kql { width: 1391px; height: 43px; margin: 0 8px 0 9px; border: 1px solid #2b2c34; border-radius: 6px; background: #16171c; display: flex; align-items: center; padding: 0 13px 1px 11px; font-size: 15.200px; }
.kql span { flex: 1; margin-left: 13px; }
.date { width: 244px; }
.cal { width: 57px; color: #36a2ef; gap: 7px; }
.date .range { width: 116px; background: #16171c; }
.auto { flex: 1; gap: 8px; font-weight: 500; }
.refresh { width: 129px; height: 43px; margin-left: 8px; padding: 0 6px 1px 8px; border-radius: 6px; background: #12324a; color: #36a2ef; gap: 11px; font-weight: 500; }
.pills { height: 53px; padding: 9px; border-bottom: 1px solid #2b2c34; }
.pill { display: inline-flex; align-items: center; height: 35px; width: 180px; padding: 0 0 1px 8px; border: 1px solid #404350; border-radius: 3px; background: #1d1e24; font-size: 13.200px; font-weight: 500; white-space: pre; }
.pill em { font-style: normal; color: #7de2d1; }
.pill svg { margin-left: 5px; }

.board { display: grid; padding: 8px 0 7px 8px; row-gap: 7px; grid-template-columns: 425px 7px 111px 7px 308px 7px 72px 6px 347px 8px 582px; grid-template-rows: 207px 299px 298px 299px 452px 543px; }
.panel { position: relative; background: #1d1e24; border: 1px solid #343741; border-radius: 7px; min-width: 0; display: flex; flex-direction: column; }
.panel h2 { margin: 0; height: 26px; flex: none; padding-left: 8.500px; font: 650 13.200px/27px Inter, sans-serif; }
.p-bar { grid-area: 1 / 1 / 2 / 4; }
.p-metric { grid-area: 1 / 5 / 2 / 8; overflow: hidden; }
.p-hist { grid-area: 2 / 1 / 3 / 8; }
.p-map { grid-area: 1 / 9 / 3 / 12; }
.p-rep, .p-type { grid-column: 1; }
.p-proto, .p-trans { grid-column: 3 / 6; }
.p-country, .p-port { grid-column: 7 / 10; }
.p-chist, .p-phist { grid-column: 11; }
.p-rep, .p-proto, .p-country, .p-chist { grid-row: 3; }
.p-type, .p-trans, .p-port, .p-phist { grid-row: 4; }
.p-user { grid-area: 5 / 1 / 6 / 8; }
.p-pass { grid-area: 5 / 9 / 6 / 12; }
.p-asn { grid-area: 6 / 1 / 7 / 8; }
.p-ip { grid-area: 6 / 9 / 7 / 12; }

.body { display: flex; }
.legend { list-style: none; flex: 1; margin: 0; padding: 9.500px 21px 0 0; font-size: 13.200px; color: #dfe5ef; }
.legend.low { padding: 20.400px 20.500px 0 0; }
.p-type .legend, .p-trans .legend, .p-port .legend { padding-top: 10.500px; }
.p-phist .legend.low { padding-top: 21.500px; }
.legend li { height: 24px; display: flex; align-items: center; white-space: nowrap; }
.legend i { width: 9px; height: 9px; border-radius: 50%; margin-right: 9px; flex: none; }
.legend svg { width: 6px; height: 14px; margin-left: auto; }

.axis { fill: none; stroke: #2f3138; stroke-width: 1.500; }
.tk { stroke: #44464f; stroke-width: 1.500; }
.tick { font-size: 11px; fill: #767982; }
.mid { text-anchor: middle; }
.end { text-anchor: end; }
.val { font-size: 12.500px; font-weight: 600; fill: #ecdcf5; text-anchor: middle; }
.lines polyline { fill: none; stroke-width: 2; vector-effect: non-scaling-stroke; stroke-linejoin: round; }
.areas path { fill-opacity: .3; stroke-width: 1.800; vector-effect: non-scaling-stroke; stroke-linejoin: round; }
.donut circle { fill: none; }
.donut path { stroke: #1d1e24; stroke-width: 1.500; }
.m-title { font-size: 17.600px; font-weight: 600; fill: #dfe5ef; }
.m-extra { font-size: 15.300px; fill: #dfe5ef; text-anchor: end; }
.m-big { font-size: 140px; font-weight: 700; fill: #e1e6ef; }
.unit { font-size: 104px; text-anchor: end; }

.hover { position: absolute; right: 17px; top: -35px; width: 113px; height: 35px; background: #1d1e24; border: 1px solid #343741; border-bottom: 0; border-radius: 6px 6px 0 0; display: flex; align-items: center; justify-content: space-between; padding: 0 13px 1px 8px; }
.map { position: relative; height: 484px; overflow: hidden; border-radius: 0 0 6px 6px; }
.borders path { fill: none; stroke: #484b53; stroke-width: 3; stroke-dasharray: 11 5; }
.borders .solid { stroke-dasharray: none; stroke: #43464e; }
.borders #mesh { stroke: #41444c; stroke-width: 2.800; }
.places text { font: 500 35px Inter, sans-serif; fill: #838996; text-anchor: middle; paint-order: stroke; stroke: #171a1c; stroke-width: 4px; }
.hits circle { opacity: .87; }
.hits { fill: #3f66d6; }
.tools { position: absolute; left: 13px; top: 13px; display: flex; flex-direction: column; gap: 9px; }
.tool { width: 35px; height: 35px; background: #1d1e24; border-radius: 6px; box-shadow: 0 3px 12px rgba(0,0,0,.4); display: flex; align-items: center; justify-content: center; }
.tall { height: 70px; flex-direction: column; gap: 18px; }
.toc { position: absolute; right: 13px; top: 13px; }
.coords, .attrib { position: absolute; right: 13px; margin: 0; height: 19px; background: #141519; font-size: 11.350px; line-height: 19px; padding: 0 4px; white-space: nowrap; font-weight: 500; }
.coords { top: 426px; }
.coords b { font-weight: 700; }
.attrib { top: 453px; font-weight: 600; }
.attrib svg { display: inline-block; vertical-align: -2px; margin-left: 3px; }

.cloud { font: 17.600px "Liberation Sans", sans-serif; text-anchor: middle; }
.lg { font-size: 35.200px; }
.xl { font-size: 70.400px; }

.grid { margin: 9px 9px 0 8px; border-top: 1px solid #343741; font-size: 15.300px; font-feature-settings: "tnum"; }
.tr { display: grid; height: 39.200px; line-height: 40px; border-bottom: 1px solid #343741; }
.three .tr { grid-template-columns: 306px 306px 1fr; }
.two .tr { grid-template-columns: 459px 1fr; }
.two { margin: 9px 8px 0 9px; }
.tr > * { margin-left: 6.600px; overflow: hidden; white-space: nowrap; }
.caps { letter-spacing: -.35px; }
.tr.th { height: 41px; border-bottom: 2px solid #dfe5ef; font-weight: 600; line-height: 40px; font-size: 15px; }
.c1 { color: #cc5642; }
.c2 { color: #d6bf57; }
.c3 { color: #54b399; }
.c4 { color: #209280; }
.pad { height: 23px; background: #141519; }
footer { display: flex; align-items: center; height: 44px; padding: 0 15px 0 17.500px; font-size: 13.200px; font-weight: 500; }
footer svg { margin-left: 8px; }
footer .pg { color: #6a6d76; margin-left: 0; }
footer .back { margin-left: auto; }
footer u { color: #36a2ef; font-size: 15px; font-weight: 600; margin: 0 13px; text-underline-offset: 2px; }
```
